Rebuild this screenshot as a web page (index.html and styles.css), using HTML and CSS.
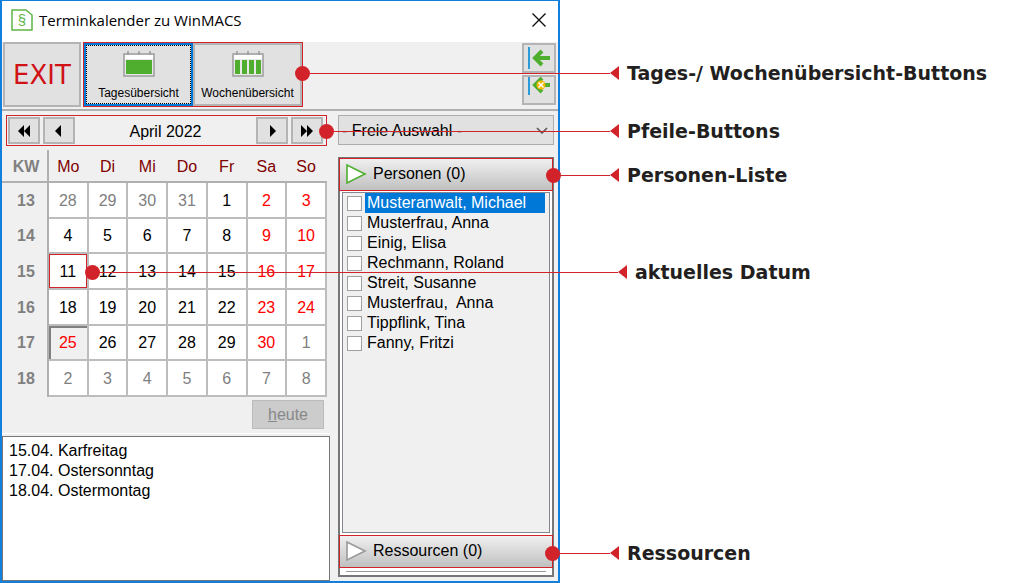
FILE: index.html
```html
<!DOCTYPE html>
<html lang="de">

<head>
    <meta charset="UTF-8">
    <meta name="viewport" content="width=device-width, initial-scale=1.0">
    <title>Terminkalender zu WinMACS</title>
    <link rel="stylesheet" href="styles.css">
</head>

<body>

    <div class="window">
        <header class="titlebar">
            <svg class="app-icon" width="22" height="22" viewBox="0 0 22 22">
                <path d="M1 1h14l6 5v15H1z" fill="#fff" stroke="#5db545" stroke-width="1.5"/>
                <text x="11" y="16" text-anchor="middle">§</text>
            </svg>
            <h1>Terminkalender zu WinMACS</h1>
            <button type="button" class="close" aria-label="Schließen">
                <svg width="14" height="14" viewBox="0 0 14 14"><path d="M.5.5l13 13M13.5.5l-13 13" stroke="#111" stroke-width="1.4"/></svg>
            </button>
        </header>

        <div class="toolbar">
            <button type="button" class="tool exit">EXIT</button>
            <div class="views">
                <button type="button" class="tool view active">
                    <svg width="32" height="26" viewBox="0 0 32 26">
                        <rect x="1" y="3" width="30" height="22" fill="#e8e8e8" stroke="#999" stroke-width="1.4"/>
                        <path d="M2 4h28v4H2z" fill="#fff"/>
                        <path d="M5 0v4M16 0v4M27 0v4" stroke="#999" stroke-width="1.5"/>
                        <path d="M3 9h26v14H3z" fill="#4fae2e"/>
                    </svg>
                    Tagesübersicht
                </button>
                <button type="button" class="tool view">
                    <svg width="32" height="26" viewBox="0 0 32 26">
                        <rect x="1" y="3" width="30" height="22" fill="#e8e8e8" stroke="#999" stroke-width="1.4"/>
                        <path d="M2 4h28v4H2z" fill="#fff"/>
                        <path d="M5 0v4M16 0v4M27 0v4" stroke="#999" stroke-width="1.5"/>
                        <path d="M3 9h5v14H3zM10 9h5v14h-5zM17 9h5v14h-5zM24 9h5v14h-5z" fill="#4fae2e"/>
                    </svg>
                    Wochenübersicht
                </button>
            </div>
            <div class="dock">
                <button type="button" class="tool" aria-label="Andocken">
                    <svg width="24" height="26" viewBox="0 0 24 26">
                        <path d="M2 2v22" stroke="#2a9bd6" stroke-width="2"/>
                        <path d="M23 13H9M15 6l-7 7 7 7" fill="none" stroke="#4fae2e" stroke-width="4"/>
                    </svg>
                </button>
                <button type="button" class="tool" aria-label="Andocken aufheben">
                    <svg width="24" height="26" viewBox="0 0 24 26">
                        <path d="M2 0v18" stroke="#2a9bd6" stroke-width="2"/>
                        <path d="M23 8H9M15 1L8 8l7 7" fill="none" stroke="#4fae2e" stroke-width="4"/>
                        <circle cx="14" cy="8" r="4.500" fill="#f5b800"/>
                        <path d="M11.500 5.500l5 5M16.500 5.500l-5 5" stroke="#fff" stroke-width="1.500"/>
                    </svg>
                </button>
            </div>
        </div>

        <div class="content">
            <section class="left">
                <div class="month-nav">
                    <button type="button" aria-label="Jahr zurück"><svg width="14" height="12" viewBox="0 0 14 12"><path d="M7 0v12L1 6zM13 0v12L7 6z"/></svg></button>
                    <button type="button" aria-label="Monat zurück"><svg width="14" height="12" viewBox="0 0 14 12"><path d="M9 0v12L3 6z"/></svg></button>
                    <span class="month">April 2022</span>
                    <button type="button" aria-label="Monat vor"><svg width="14" height="12" viewBox="0 0 14 12"><path d="M5 0v12l6-6z"/></svg></button>
                    <button type="button" aria-label="Jahr vor"><svg width="14" height="12" viewBox="0 0 14 12"><path d="M1 0v12l6-6zM7 0v12l6-6z"/></svg></button>
                </div>

                <table class="calendar">
                    <thead>
                        <tr><th class="week">KW</th><th>Mo</th><th>Di</th><th>Mi</th><th>Do</th><th>Fr</th><th>Sa</th><th>So</th></tr>
                    </thead>
                    <tbody>
                        <tr>
                            <th class="week">13</th>
                            <td class="other"><button type="button">28</button></td>
                            <td class="other"><button type="button">29</button></td>
                            <td class="other"><button type="button">30</button></td>
                            <td class="other"><button type="button">31</button></td>
                            <td><button type="button">1</button></td>
                            <td class="red"><button type="button">2</button></td>
                            <td class="red"><button type="button">3</button></td>
                        </tr>
                        <tr>
                            <th class="week">14</th>
                            <td><button type="button">4</button></td>
                            <td><button type="button">5</button></td>
                            <td><button type="button">6</button></td>
                            <td><button type="button">7</button></td>
                            <td><button type="button">8</button></td>
                            <td class="red"><button type="button">9</button></td>
                            <td class="red"><button type="button">10</button></td>
                        </tr>
                        <tr>
                            <th class="week">15</th>
                            <td class="marked"><button type="button">11</button></td>
                            <td><button type="button">12</button></td>
                            <td><button type="button">13</button></td>
                            <td><button type="button">14</button></td>
                            <td><button type="button">15</button></td>
                            <td class="red"><button type="button">16</button></td>
                            <td class="red"><button type="button">17</button></td>
                        </tr>
                        <tr>
                            <th class="week">16</th>
                            <td><button type="button">18</button></td>
                            <td><button type="button">19</button></td>
                            <td><button type="button">20</button></td>
                            <td><button type="button">21</button></td>
                            <td><button type="button">22</button></td>
                            <td class="red"><button type="button">23</button></td>
                            <td class="red"><button type="button">24</button></td>
                        </tr>
                        <tr>
                            <th class="week">17</th>
                            <td class="red pressed"><button type="button">25</button></td>
                            <td><button type="button">26</button></td>
                            <td><button type="button">27</button></td>
                            <td><button type="button">28</button></td>
                            <td><button type="button">29</button></td>
                            <td class="red"><button type="button">30</button></td>
                            <td class="other"><button type="button">1</button></td>
                        </tr>
                        <tr>
                            <th class="week">18</th>
                            <td class="other"><button type="button">2</button></td>
                            <td class="other"><button type="button">3</button></td>
                            <td class="other"><button type="button">4</button></td>
                            <td class="other"><button type="button">5</button></td>
                            <td class="other"><button type="button">6</button></td>
                            <td class="other"><button type="button">7</button></td>
                            <td class="other"><button type="button">8</button></td>
                        </tr>
                    </tbody>
                </table>

                <button type="button" class="today" disabled><u>h</u>eute</button>

                <ul class="holidays">
                    <li>15.04. Karfreitag</li>
                    <li>17.04. Ostersonntag</li>
                    <li>18.04. Ostermontag</li>
                </ul>
            </section>

            <section class="right">
                <div class="select-box">
                    <select aria-label="Auswahl">
                        <option>- Freie Auswahl -</option>
                    </select>
                    <svg width="12" height="7" viewBox="0 0 12 7"><path d="M1 1l5 5 5-5" fill="none" stroke="#555" stroke-width="1.5"/></svg>
                </div>

                <div class="panel">
                    <button type="button" class="group">
                        <svg width="22" height="22" viewBox="0 0 22 22"><path d="M2 2v18l18-9z" fill="#fff" stroke="#4fae2e" stroke-width="1.6"/></svg>
                        Personen (0)
                    </button>
                    <div class="persons">
                        <label class="selected"><input type="checkbox"><span>Musteranwalt, Michael</span></label>
                        <label><input type="checkbox"><span>Musterfrau, Anna</span></label>
                        <label><input type="checkbox"><span>Einig, Elisa</span></label>
                        <label><input type="checkbox"><span>Rechmann, Roland</span></label>
                        <label><input type="checkbox"><span>Streit, Susanne</span></label>
                        <label><input type="checkbox"><span>Musterfrau,&nbsp; Anna</span></label>
                        <label><input type="checkbox"><span>Tippflink, Tina</span></label>
                        <label><input type="checkbox"><span>Fanny, Fritzi</span></label>
                    </div>
                    <button type="button" class="group">
                        <svg width="22" height="22" viewBox="0 0 22 22"><path d="M2 2v18l18-9z" fill="#fff" stroke="#999" stroke-width="1.6"/></svg>
                        Ressourcen (0)
                    </button>
                    <div class="panel-end"></div>
                </div>
            </section>
        </div>
    </div>

    <!-- callouts over the window -->
    <div class="callout to-views"><i class="dot"></i><i class="line"></i><span>Tages-/ Wochenübersicht-Buttons</span></div>
    <div class="callout to-arrows"><i class="dot"></i><i class="line"></i><span>Pfeile-Buttons</span></div>
    <div class="callout to-persons"><i class="dot"></i><i class="line"></i><span>Personen-Liste</span></div>
    <div class="callout to-date"><i class="dot"></i><i class="line"></i><span>aktuelles Datum</span></div>
    <div class="callout to-resources"><i class="dot"></i><i class="line"></i><span>Ressourcen</span></div>

</body>

</html>
```
FILE: styles.css
```css
* {
    box-sizing: border-box;
}

body {
    margin: 0;
    position: relative;
    background: #fff;
    color: #000;
    font-family: "Liberation Sans", Arial, sans-serif;
    font-size: 16px;
}

button,
select {
    font: inherit;
    color: inherit;
    padding: 0;
    margin: 0;
}

svg {
    display: block;
    flex: none;
}

.window {
    max-width: 560px;
    min-height: 100vh;
    display: flex;
    flex-direction: column;
    background: #f0f0f0;
    border: 2px solid #1080dc;
    border-top-width: 1px;
}

/* title bar */
.titlebar {
    display: flex;
    align-items: center;
    gap: 6px;
    height: 41px;
    padding: 0 12px 3px 9px;
    background: #fff;
}

.titlebar h1 {
    flex: 1;
    margin: 0;
    font-family: "Open Sans", "Noto Sans", sans-serif;
    font-size: 15px;
    font-weight: normal;
}

.app-icon text {
    fill: #5db545;
    font-size: 15px;
}

.close {
    border: none;
    background: none;
}

/* toolbar */
.toolbar {
    display: flex;
    gap: 2px;
    height: 69px;
    padding: 0 2px 2px 1px;
    border-bottom: 2px solid #b0b0b0;
}

.tool {
    display: flex;
    flex-direction: column;
    align-items: center;
    background: #e1e1e1;
    border: 2px solid #b4b4b4;
}

.exit {
    width: 78px;
    justify-content: center;
    color: #d01217;
    font-family: "DejaVu Sans", sans-serif;
    font-size: 26px;
}

.views {
    display: flex;
    width: 220px;
    border: 1px solid #d2232a;
}

.view {
    flex: 1;
    justify-content: space-between;
    padding: 6px 0 3px;
    font-size: 12px;
    line-height: 16px;
}

.view.active {
    border-color: #0078d7;
    outline: 1px dotted #000;
    outline-offset: -3px;
}

.dock {
    display: flex;
    flex-direction: column;
    gap: 2px;
    margin-left: auto;
    padding-top: 1px;
}

.dock .tool {
    width: 34px;
    height: 30px;
}

/* calendar side */
.content {
    flex: 1;
    display: grid;
    grid-template-columns: minmax(0, 328px) minmax(0, 1fr);
}

.left {
    display: flex;
    flex-direction: column;
    padding-top: 4px;
}

.month-nav {
    display: flex;
    align-items: center;
    gap: 3px;
    height: 31px;
    margin: 0 3px 4px 4px;
    padding: 1px 3px 1px 1px;
    border: 1px solid #d2232a;
}

.month-nav button {
    display: flex;
    align-items: center;
    justify-content: center;
    width: 32px;
    height: 27px;
    background: #e1e1e1;
    border: 2px solid #b4b4b4;
}

.month {
    flex: 1;
    padding-top: 2px;
    text-align: center;
}

.calendar {
    width: 325px;
    height: 247px;
    table-layout: fixed;
    border-collapse: collapse;
    text-align: center;
}

.calendar th {
    padding: 2px 0 0;
    color: #800000;
    font-weight: normal;
    border-bottom: 2px solid #b0b0b0;
}

.calendar thead th {
    height: 32px;
}

.calendar .week {
    width: 46px;
    padding-left: 3px;
    color: #808080;
    font-weight: bold;
    border-right: 2px solid #b0b0b0;
}

.calendar tbody .week {
    border-bottom: none;
}

.calendar td {
    padding: 2px 0 0;
    background: #fff;
    border: 2px solid #bdbdbd;
}

.calendar td button {
    width: 100%;
    border: none;
    background: none;
}

.calendar .other {
    color: #808080;
}

.calendar .red {
    color: #f00;
}

.calendar .marked {
    box-shadow: inset 0 0 0 1px #d2232a;
}

.calendar .pressed {
    background: #f0f0f0;
    box-shadow: inset 2px 2px 0 #808080;
}

.today {
    align-self: flex-end;
    width: 72px;
    height: 29px;
    margin: 3px 6px 6px 0;
    color: #888;
    background: #ccc;
    border: 1px solid #bbb;
}

.holidays {
    flex: 1;
    margin: 1px 0 0;
    padding: 4px 6px;
    list-style: none;
    line-height: 20px;
    background: #fff;
    border: 1px solid #777;
    box-shadow: 0 -2px 0 #f0f0f0, 0 -3px 0 #fff;
}

/* persons side */
.right {
    display: flex;
    flex-direction: column;
    gap: 12px;
    padding: 4px 4px 4px 8px;
}

.select-box {
    display: grid;
    align-items: center;
}

.select-box select,
.select-box svg {
    grid-area: 1 / 1;
}

.select-box select {
    appearance: none;
    width: 100%;
    height: 30px;
    padding-left: 3px;
    background: #e1e1e1;
    border: 1px solid #adadad;
    border-radius: 0;
}

.select-box svg {
    justify-self: end;
    margin-right: 6px;
    pointer-events: none;
}

.panel {
    flex: 1;
    display: flex;
    flex-direction: column;
    background: #fff;
    border: 2px solid #777;
    border-top-width: 1px;
}

.group {
    display: flex;
    align-items: center;
    gap: 6px;
    height: 33px;
    margin: 0 -1px;
    padding: 0 5px 1px;
    background: linear-gradient(#f0f0f0, #c0c0c0);
    border: 1px solid #d2232a;
}

.persons {
    flex: 1;
    margin: 1px 2px 2px;
    padding: 0 4px;
    background: #f0f0f0;
    border: 1px solid #828790;
}

.persons label {
    display: flex;
    align-items: center;
    gap: 3px;
    height: 20px;
}

.persons input {
    appearance: none;
    width: 15px;
    height: 15px;
    margin: 0;
    background: #fff;
    border: 1px solid #a0a0a0;
}

.persons span {
    flex: 1;
    padding-left: 2px;
    line-height: 20px;
}

.selected span {
    color: #fff;
    background: #0078d7;
}

.panel-end {
    height: 7px;
    margin: 0 6px;
    background: linear-gradient(#999, #999) center / 100% 1px no-repeat;
}

/* callouts */
.callout {
    position: absolute;
    display: flex;
    align-items: center;
    height: 24px;
    color: #231f20;
    font-family: "DejaVu Sans", Verdana, sans-serif;
    font-size: 19px;
    font-weight: bold;
    white-space: nowrap;
}

.dot {
    width: 15px;
    height: 15px;
    border-radius: 50%;
    background: #d2232a;
}

.line {
    flex: 1;
    height: 1px;
    background: #d2232a;
}

/* arrow head in front of the text */
.callout span::before {
    content: "";
    display: inline-block;
    margin-right: 8px;
    border: 7px solid transparent;
    border-left-width: 0;
    border-right: 9px solid #d2232a;
}

.callout span {
    width: 390px;
}

.to-views {
    top: 61px;
    left: 295px;
    width: 705px;
}

.to-arrows {
    top: 119px;
    left: 319px;
    width: 681px;
}

.to-persons {
    top: 163px;
    left: 546px;
    width: 454px;
}

.to-date {
    top: 260px;
    left: 85px;
    width: 923px;
}

.to-resources {
    top: 541px;
    left: 545px;
    width: 455px;
}
```
